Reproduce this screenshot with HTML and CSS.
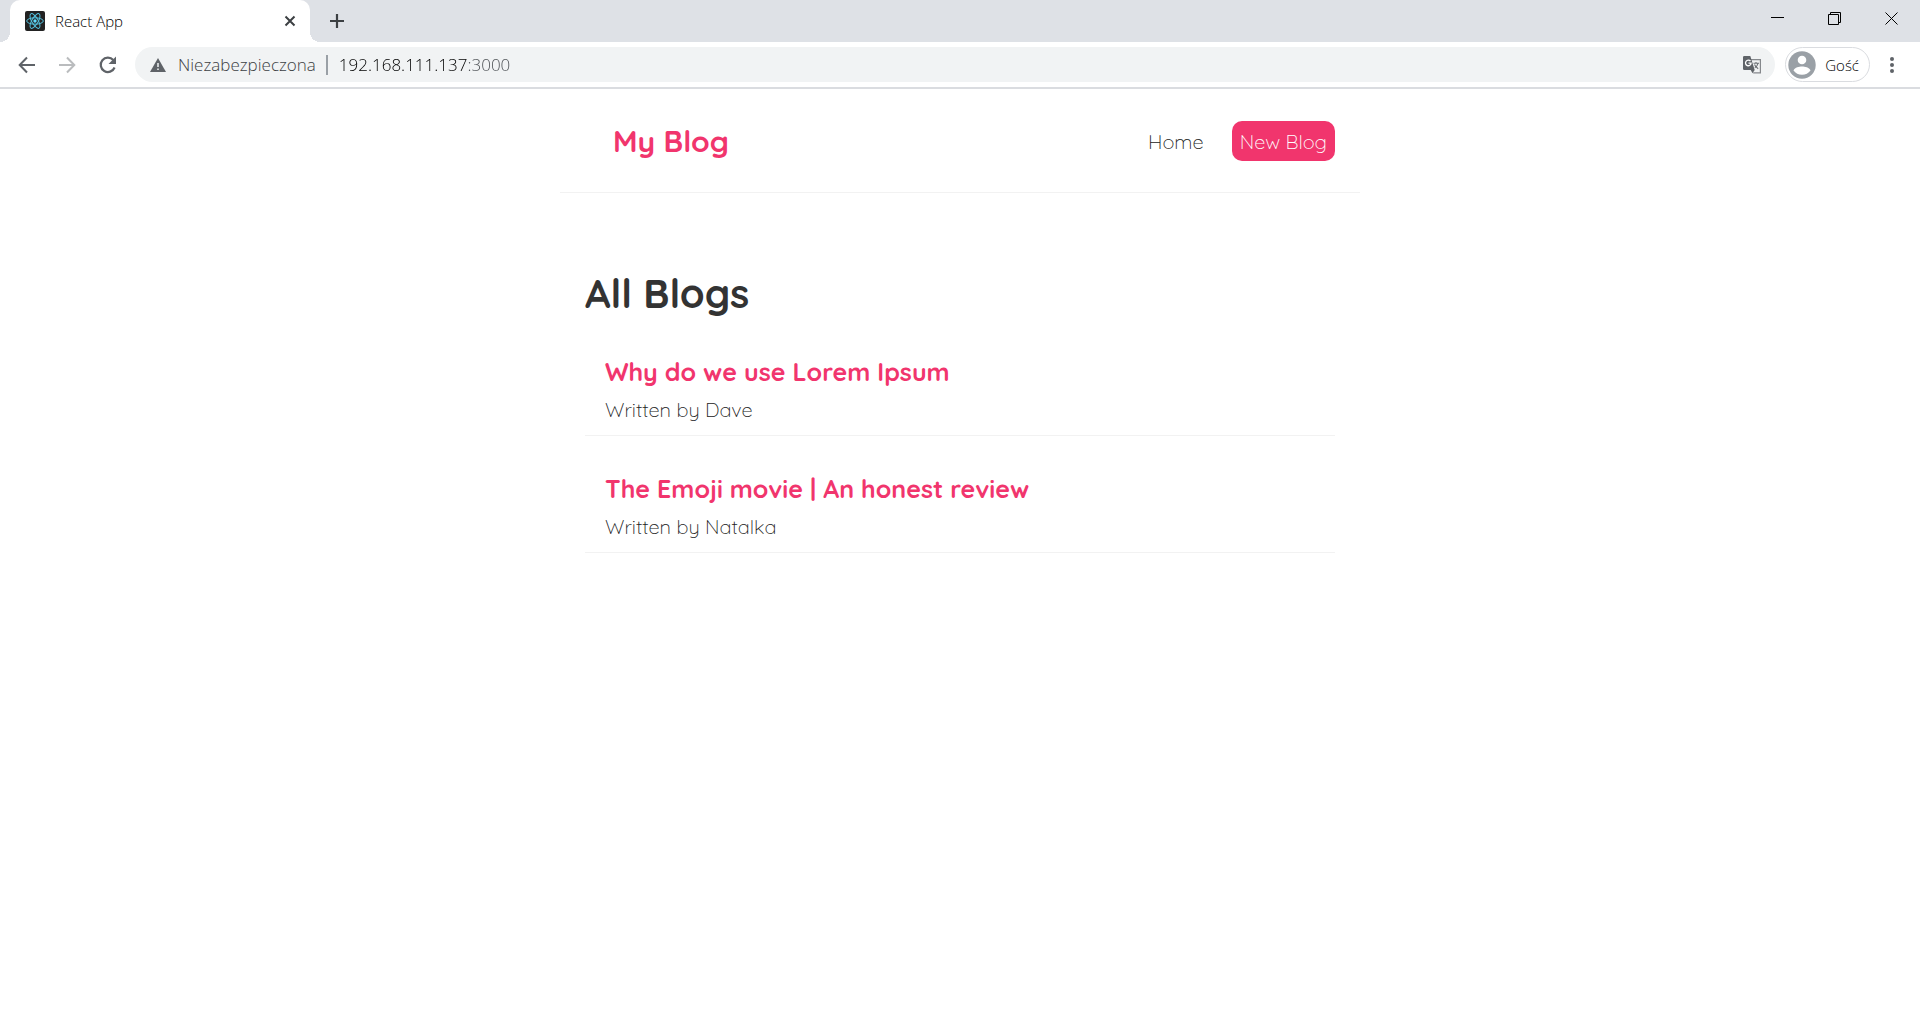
FILE: index.html
```html
<!DOCTYPE html>
<html lang="pl">
<head>
<meta charset="utf-8">
<meta name="viewport" content="width=device-width, initial-scale=1">
<title>React App</title>
<link rel="stylesheet" href="styles.css">
</head>
<body>
<header class="browser">
  <div class="tab-strip">
    <div class="tab">
      <svg class="favicon" viewBox="0 0 20 20" width="20" height="20" aria-hidden="true">
        <rect width="20" height="20" rx="2" fill="#222"/>
        <g fill="none" stroke="#53c1de" stroke-width="1">
          <ellipse cx="10" cy="10" rx="8.3" ry="3.2"/>
          <ellipse cx="10" cy="10" rx="8.3" ry="3.2" transform="rotate(60 10 10)"/>
          <ellipse cx="10" cy="10" rx="8.3" ry="3.2" transform="rotate(120 10 10)"/>
        </g>
        <circle cx="10" cy="10" r="1.7" fill="#61dafb"/>
      </svg>
      <span class="tab-title">React App</span>
      <button class="icon-button" type="button" aria-label="Zamknij kartę">
        <svg viewBox="0 0 20 20" width="20" height="20"><path d="M5.5 5.5l9 9M14.5 5.5l-9 9" stroke="#3c4043" stroke-width="2"/></svg>
      </button>
    </div>
    <button class="icon-button new-tab" type="button" aria-label="Nowa karta">
      <svg viewBox="0 0 20 20" width="20" height="20"><path d="M10 3v14M3 10h14" stroke="#3c4043" stroke-width="2.2"/></svg>
    </button>
    <div class="window-controls">
      <button class="window-button" type="button" aria-label="Minimalizuj"><svg viewBox="0 0 14 14" width="14" height="14"><path d="M0 6.5h13" stroke="#000"/></svg></button>
      <button class="window-button" type="button" aria-label="Przywróć"><svg viewBox="0 0 14 14" width="14" height="14"><path d="M.5 3.500h10v10H.5zM2.500 3.500v-2h10v10h-2" fill="none" stroke="#000"/></svg></button>
      <button class="window-button" type="button" aria-label="Zamknij"><svg viewBox="0 0 14 14" width="14" height="14"><path d="M.5 1.500l12 12M12.500 1.500l-12 12" stroke="#000"/></svg></button>
    </div>
  </div>
  <div class="toolbar">
    <div class="nav-buttons">
      <button class="icon-button" type="button" aria-label="Wstecz"><svg viewBox="0 0 20 20" width="20" height="20"><path d="M18 10H3M10 2.500L2.700 10l7.300 7.500" fill="none" stroke="#5f6368" stroke-width="2"/></svg></button>
      <button class="icon-button" type="button" aria-label="Dalej" disabled><svg viewBox="0 0 20 20" width="20" height="20"><path d="M2 10h15M10 2.500l7.300 7.500-7.300 7.500" fill="none" stroke="#babcbe" stroke-width="2"/></svg></button>
      <button class="icon-button" type="button" aria-label="Odśwież"><svg viewBox="0 0 20 20" width="20" height="20"><path d="M17.600 12.500A7.200 7.200 0 1 1 16.300 5" fill="none" stroke="#5f6368" stroke-width="2.200"/><path d="M19 1.500v7.500H11.500z" fill="#5f6368"/></svg></button>
    </div>
    <div class="omnibox">
      <svg viewBox="0 0 16 14" width="16" height="14" aria-hidden="true"><path d="M8 0l8 14H0z" fill="#5f6368"/><path d="M8 5v4M8 10.500v1.500" stroke="#f1f3f4" stroke-width="1.500"/></svg>
      <label class="security" for="address">Niezabezpieczona</label>
      <input class="address" id="address" type="text" value="192.168.111.137:3000">
      <button class="icon-button" type="button" aria-label="Przetłumacz tę stronę">
        <svg viewBox="0 0 20 20" width="20" height="20"><path d="M8 4.600h10.400v13.200h-7.200" fill="#f1f3f4" stroke="#85888c" stroke-width="1.200"/><path d="M2.300 1H8.300l4.400 14H2.300A1.300 1.300 0 0 1 1 13.700V2.300A1.300 1.300 0 0 1 2.300 1z" fill="#5f6368"/><path d="M8.700 15h4l-2.200 3.200z" fill="#5f6368"/><path d="M8.500 6.200A2.800 2.800 0 1 0 9.100 8.200H6.500" fill="none" stroke="#fff" stroke-width="1.300"/><path d="M11.500 8.300h5.500M14 7v1.300M16 8.300c-.5 2-1.700 3.500-3.200 4.600M12.500 9.500c.7 1.700 2 3.200 3.700 4.300" fill="none" stroke="#6f7377" stroke-width="1.100"/></svg>
      </button>
    </div>
    <button class="profile" type="button">
      <svg viewBox="0 0 28 28" width="28" height="28" aria-hidden="true"><circle cx="14" cy="14" r="13.700" fill="#9aa0a6"/><circle cx="14" cy="9" r="4.300" fill="#fff"/><path d="M5.500 19.500C7 16.500 11 15.600 14 15.600s7 .9 8.500 3.900C20.500 22.300 17.500 23.800 14 23.800s-6.500-1.500-8.500-4.300z" fill="#fff"/></svg>
      <span>Gość</span>
    </button>
    <button class="icon-button menu" type="button" aria-label="Menu">
      <svg viewBox="0 0 20 20" width="20" height="20" fill="#5f6368"><circle cx="10" cy="4" r="2"/><circle cx="10" cy="10" r="2"/><circle cx="10" cy="16" r="2"/></svg>
    </button>
  </div>
</header>

<nav class="navbar">
  <h1 class="brand">My Blog</h1>
  <div class="links">
    <a class="link" href="#home">Home</a>
    <a class="link link-new" href="#create">New Blog</a>
  </div>
</nav>

<main class="content">
  <h2 class="heading">All Blogs</h2>
  <article class="blog-preview">
    <a class="blog-link" href="#blog-1">
      <h3 class="blog-title">Why do we use Lorem Ipsum</h3>
      <p class="blog-author">Written by Dave</p>
    </a>
  </article>
  <article class="blog-preview">
    <a class="blog-link" href="#blog-2">
      <h3 class="blog-title">The Emoji movie | An honest review</h3>
      <p class="blog-author">Written by Natalka</p>
    </a>
  </article>
</main>
</body>
</html>
```
FILE: styles.css
```css
* {
  box-sizing: border-box;
  margin: 0;
}

body {
  background: #fff;
  color: #222;
  font-family: "Quicksand", "Lato", sans-serif;
  font-size: 20px;
  font-weight: 300;
}

a {
  color: inherit;
  text-decoration: none;
}

svg {
  display: block;
  flex: none;
}

/* Browser frame */
.browser {
  border-bottom: 2px solid #dadce0;
  font-family: "Segoe UI", "Open Sans", sans-serif;
  font-size: 15px;
  font-weight: 300;
}

.tab-strip {
  display: flex;
  height: 42px;
  padding-left: 10px;
  background: #dee1e6;
}

.tab {
  position: relative;
  display: flex;
  align-items: center;
  width: 300px;
  padding: 0 10px 0 15px;
  border-radius: 10px 10px 0 0;
  background: #fff;
}

.tab::before,
.tab::after {
  content: "";
  position: absolute;
  bottom: 0;
  width: 10px;
  height: 10px;
}

.tab::before {
  right: 100%;
  background: radial-gradient(circle at 0 0, #dee1e6 10px, #fff 10px);
}

.tab::after {
  left: 100%;
  background: radial-gradient(circle at 100% 0, #dee1e6 10px, #fff 10px);
}

.tab-title {
  flex: 1;
  padding-left: 10px;
  color: #000;
  line-height: 20px;
}

.icon-button {
  padding: 0;
  border: 0;
  background: none;
}

.new-tab {
  padding: 0 17px;
}

.window-controls {
  display: flex;
  align-items: flex-start;
  margin-left: auto;
}

.window-button {
  display: flex;
  align-items: center;
  justify-content: center;
  width: 57px;
  height: 36px;
  padding: 0;
  border: 0;
  background: none;
}

.toolbar {
  display: flex;
  align-items: center;
  height: 45px;
  padding: 0 18px 0 17px;
  gap: 10px;
}

.nav-buttons {
  display: flex;
  gap: 20px;
  padding-right: 8px;
}

.omnibox {
  display: flex;
  flex: 1;
  align-items: center;
  height: 35px;
  padding: 0 13px 0 15px;
  border-radius: 18px;
  background: #f1f3f4;
  font-size: 17px;
}

.security {
  padding: 0 10px 0 12px;
  border-right: 2px solid #9aa0a6;
  color: #3c4043;
  line-height: 20px;
}

/* The host is dark, the port after it is grey */
.address {
  flex: 1;
  min-width: 0;
  margin-left: 11px;
  padding: 0;
  border: 0;
  outline: 0;
  background: linear-gradient(90deg, #000 128px, #4a4e52 128px);
  background-clip: text;
  -webkit-text-fill-color: transparent;
  font: inherit;
}

.profile {
  display: flex;
  align-items: center;
  gap: 9px;
  height: 35px;
  padding: 0 10px 0 2px;
  border: 1px solid #dadce0;
  border-radius: 18px;
  background: #fff;
  color: #000;
  font: inherit;
}

.menu {
  padding-left: 2px;
}

/* Blog page */
.navbar {
  display: flex;
  align-items: center;
  justify-content: space-between;
  max-width: 800px;
  margin: 0 auto;
  padding: 32px 25px 31px 53px;
  border-bottom: 1px solid #f2f2f2;
}

.brand {
  color: #f1356d;
  font-size: 30px;
  font-weight: 700;
  line-height: 40px;
}

.links {
  display: flex;
  gap: 20px;
}

.link {
  padding: 9px 8px 7px;
  line-height: 24px;
}

.link-new {
  border-radius: 10px;
  background: #f1356d;
  color: #fff;
}

.content {
  max-width: 750px;
  margin: 75px auto 0;
}

.heading {
  margin-bottom: 26px;
  color: #333;
  font-size: 40px;
  font-weight: 700;
  line-height: 50px;
}

.blog-preview {
  margin-bottom: 25px;
  padding: 12px 20px 13px;
  border-bottom: 1px solid #f2f2f2;
}

.blog-title {
  margin-bottom: 10px;
  color: #f1356d;
  font-size: 25px;
  font-weight: 700;
  line-height: 32px;
}

.blog-author {
  line-height: 24px;
}
```
